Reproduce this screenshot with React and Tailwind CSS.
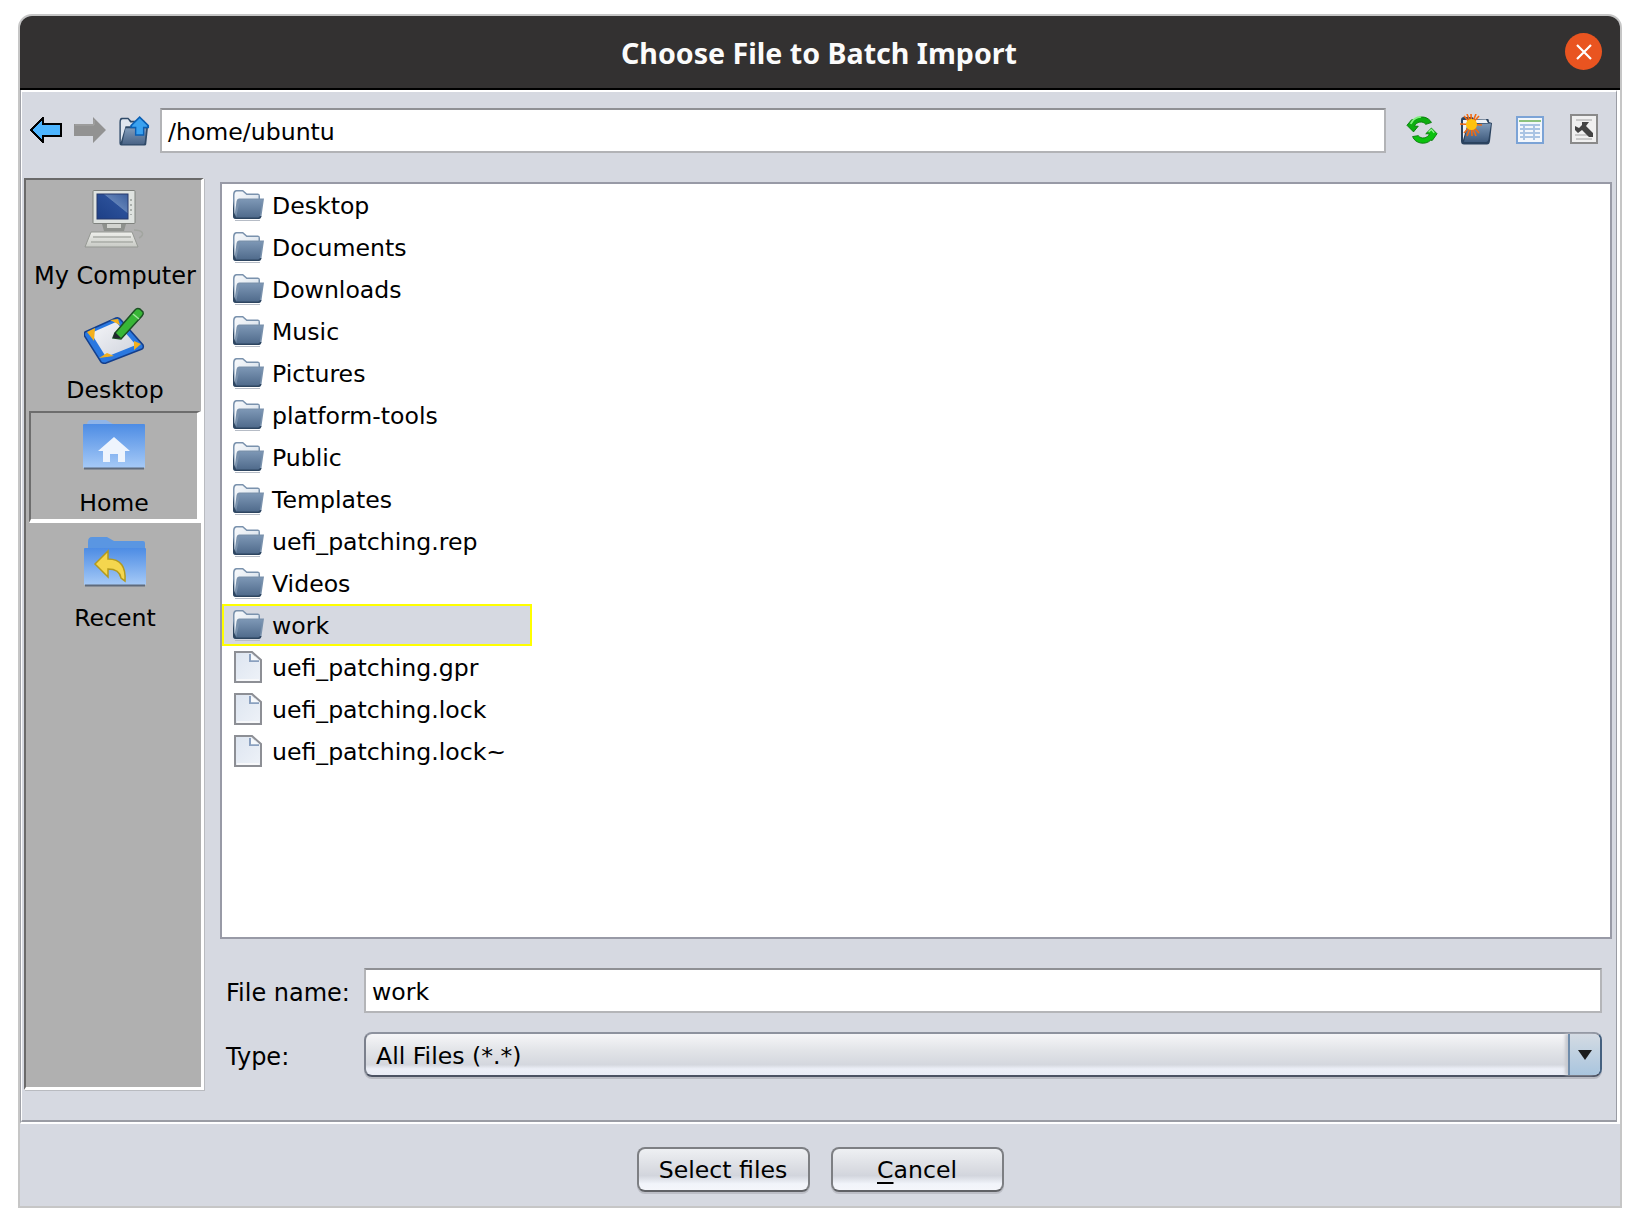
import React from "react";

const folderNames = ["Desktop","Documents","Downloads","Music","Pictures","platform-tools","Public","Templates","uefi_patching.rep","Videos","work"];
const fileNames = ["uefi_patching.gpr","uefi_patching.lock","uefi_patching.lock~"];

function Folder() {
  return (
    <svg width="32" height="32" viewBox="0 0 32 32">
      <defs>
        <linearGradient id="fb" x1="0" y1="0" x2="0" y2="1">
          <stop offset="0" stopColor="#7c96b4" />
          <stop offset="1" stopColor="#506b8c" />
        </linearGradient>
        <linearGradient id="fbk" x1="0" y1="0" x2="1" y2="1">
          <stop offset="0" stopColor="#f8fafc" />
          <stop offset="1" stopColor="#d0dbe7" />
        </linearGradient>
      </defs>
      <path d="M1 6 Q1 1.5 4 1 L11 1 L15 4.5 L26 4.5 Q28 4.5 28 7 L28 9.5 L32 9.5 L29.5 27 Q29 30 26.5 30 L4 30 Q1 30 1 27 Z" fill="#7a92ad" />
      <path d="M1 12 L1 27 Q1 30 4 30 L26.5 30 Q29 30 29.5 27 L28 27 L4 28 L2.6 24 Z" fill="#2d4560" />
      <path d="M2.5 6.5 Q2.5 2.8 4.5 2.4 L10.5 2.4 L14.5 6 L26.5 6 L26.5 9.5 L7 9.5 Q5 9.5 4.6 12 L2.6 26 Z" fill="url(#fbk)" />
      <path d="M8 11 L30.5 11 L28 26.5 Q27.7 28.4 26 28.4 L4 28.4 Z" fill="url(#fb)" />
      <path d="M3 31.5 L28 31.5" stroke="#b6bcc6" strokeWidth="1" />
    </svg>
  );
}

function FileIcon() {
  return (
    <svg width="28" height="32" viewBox="0 0 28 32">
      <defs>
        <linearGradient id="fl" x1="0" y1="0" x2="1" y2="1">
          <stop offset="0" stopColor="#dde5f0" />
          <stop offset="1" stopColor="#eef2f8" />
        </linearGradient>
      </defs>
      <path d="M1 1 L18 1 L27 9 L27 31 L1 31 Z" fill="url(#fl)" stroke="#8d8f95" strokeWidth="2" />
      <path d="M16 3 L16 10 L25 10" fill="none" stroke="#8aa0bf" strokeWidth="2" />
      <path d="M17 3 L25 9.2 L17 9.2 Z" fill="#f7f9fb" />
      <path d="M3 29 L25 29" stroke="#f7f8fa" strokeWidth="2" />
    </svg>
  );
}

function ArrowLeft() {
  return (
    <svg width="32" height="26" viewBox="0 0 32 26" shapeRendering="crispEdges" className="mt-[9px] shrink-0">
      <path d="M1 13 L13 1 L13 7 L31 7 L31 19 L13 19 L13 25 Z" fill="#4db5ff" stroke="#000" strokeWidth="2" />
    </svg>
  );
}
function ArrowRight() {
  return (
    <svg width="32" height="26" viewBox="0 0 32 26" className="ml-[12px] mt-[9px] shrink-0">
      <path d="M0 7 L19 7 L19 0 L32 13 L19 26 L19 19 L0 19 Z" fill="#929292" />
      <path d="M1 8 L20 8 L20 3" fill="none" stroke="#a6a6a6" strokeWidth="1" />
    </svg>
  );
}
function UpFolder() {
  return (
    <svg width="32" height="32" viewBox="0 0 34 34" className="ml-[12px] mt-[7px] shrink-0">
      <defs>
        <linearGradient id="ub" x1="0" y1="0" x2="0" y2="1">
          <stop offset="0" stopColor="#7f9ab9" />
          <stop offset="1" stopColor="#4a6486" />
        </linearGradient>
      </defs>
      <path d="M1.5 8 Q1.5 3 4 3 L11 3 L14 6 L28 6 L28 12 L32 12 L30 31 Q30 32.5 28 32.5 L3.5 32.5 Q1.5 32.5 1.5 30 Z" fill="#2f4a68" />
      <path d="M3 8 Q3 4.5 5 4.5 L10.5 4.5 L13 8 L26 8 L26 12 L8 12 L3 29 Z" fill="#dfe6ef" />
      <path d="M8 14 L30 14 L28.3 29.5 Q28 31 27 31 L4.5 31 Z" fill="url(#ub)" />
      <path d="M23 1 L33 11 L33 14 L28 14 L28 22 L18 22 L18 14 L13 14 L13 11 Z" fill="#0a5fb4" />
      <path d="M23 3.5 L31 11.5 L31 12.5 L26.5 12.5 L26.5 20.5 L19.5 20.5 L19.5 12.5 L15 12.5 L15 11.5 Z" fill="#3aa2f0" />
    </svg>
  );
}
function Refresh() {
  return (
    <svg width="32" height="32" viewBox="0 0 34 34" className="ml-[20px] mt-[6px] shrink-0">
      <path d="M27 9 C24 3 15 1 10 6 L6 6 L1 12 L8 19 L13 13 L9 13 C11 8 18 7 21 11 Z" fill="#0dae10" stroke="#0b7d0d" strokeWidth="1" />
      <path d="M5 10.5 C7 6 11 3 16 3" stroke="#7ff07d" strokeWidth="2" fill="none" />
      <path d="M7 24 C10 32 21 33 26 28 L28 28 L33 21 L27 15 L21 21 L25 21 C23 26 16 27 13 23 Z" fill="#0cc20f" stroke="#0b7d0d" strokeWidth="1" />
      <path d="M24 19 L27 16.5 L30 20" stroke="#8cf58a" strokeWidth="1.5" fill="none" />
    </svg>
  );
}
function NewFolder() {
  return (
    <svg width="32" height="32" viewBox="0 0 32 32" className="ml-[22px] mt-[6px] shrink-0">
      <defs>
        <linearGradient id="nb" x1="0" y1="0" x2="0" y2="1">
          <stop offset="0" stopColor="#7f9ab9" />
          <stop offset="1" stopColor="#3f5a7c" />
        </linearGradient>
      </defs>
      <path d="M1 6 Q1 3 4 3 L12 3 L15 5 L28 5 Q29 5 29 8 L32 9 L30 27 Q29.5 30.5 27 30.5 L4 30.5 Q1 30.5 1 27 Z" fill="#2b435f" />
      <path d="M3 6 L26 5.5 L28 9 L8 9 L3 26 Z" fill="#eef2f7" />
      <path d="M8 10 L31 9.5 L28.5 25 Q28 28 26 28 L4 28 Z" fill="url(#nb)" />
      <g stroke="#f26a11" strokeWidth="1.6" fill="none">
        <path d="M11 0 L12 22" />
        <path d="M0 10 L22 11" />
        <path d="M4 2 L19 19" />
        <path d="M19 2 L4 19" />
        <path d="M7 0 L16 22" />
        <path d="M16 0 L7 22" />
      </g>
      <circle cx="11.5" cy="10.5" r="5.5" fill="#ffc20e" />
    </svg>
  );
}
function ListView() {
  return (
    <svg width="28" height="28" viewBox="0 0 28 28" shapeRendering="crispEdges" className="ml-[24px] mt-[8px] shrink-0">
      <rect x="1" y="1" width="26" height="26" fill="#f3f7fc" stroke="#7ba3d6" strokeWidth="2" />
      <rect x="3" y="4" width="22" height="2" fill="#8cc27f" />
      <path d="M4 9 H24 M4 13 H24 M4 17 H24 M4 21 H24" stroke="#a9c4e4" strokeWidth="2" />
      <path d="M8 8 V24 M18 8 V24" stroke="#a9c4e4" strokeWidth="2" />
    </svg>
  );
}
function Details() {
  return (
    <svg width="28" height="30" viewBox="0 0 28 30" className="ml-[26px] mt-[6px] shrink-0">
      <rect x="1" y="1" width="26" height="28" fill="#f0f0f0" stroke="#8a8a8a" strokeWidth="2" />
      <path d="M6 6 H22 M5 21 H22 M6 25 H22" stroke="#c9c9c9" strokeWidth="2" />
      <path d="M12 8 L19 8 L16 12 L23 19 L23 23 L19 23 L12 16 L8 19 L5 16 L5 12 L9 14 L12 11 Z" fill="#434343" />
    </svg>
  );
}

function Computer() {
  return (
    <svg width="62" height="58" viewBox="0 0 62 58">
      <defs>
        <linearGradient id="scr" x1="0" y1="1" x2="1" y2="0">
          <stop offset="0" stopColor="#1d3f86" />
          <stop offset="0.6" stopColor="#2a4f98" />
          <stop offset="0.62" stopColor="#5f80b6" />
          <stop offset="1" stopColor="#3c5f9e" />
        </linearGradient>
        <linearGradient id="kb" x1="0" y1="0" x2="0" y2="1">
          <stop offset="0" stopColor="#eff0ec" />
          <stop offset="1" stopColor="#c8cac5" />
        </linearGradient>
      </defs>
      <rect x="9" y="0.5" width="42" height="33" rx="1" fill="#dfe3e0" stroke="#7f827e" />
      <rect x="13" y="4" width="31" height="25" fill="url(#scr)" stroke="#26386a" />
      <path d="M47 9 V25" stroke="#aab0ac" strokeWidth="2" strokeDasharray="2 3" />
      <path d="M18 34 H42 L40 41 H20 Z" fill="#8e918d" />
      <rect x="23" y="34" width="14" height="4" fill="#d2d4d0" />
      <path d="M7 42 L48 42 L54 57 L1 57 Z" fill="url(#kb)" stroke="#959893" />
      <path d="M9 47 H47 M7 52 H49" stroke="#a9aca7" strokeWidth="1.5" />
      <path d="M50 40 C58 40 62 44 55 48" fill="none" stroke="#a2a5a0" strokeWidth="1.5" />
    </svg>
  );
}
function DesktopIcon() {
  return (
    <svg width="62" height="58" viewBox="0 0 62 58">
      <defs>
        <linearGradient id="ds" x1="0" y1="0" x2="1" y2="1">
          <stop offset="0" stopColor="#f5f6f9" />
          <stop offset="1" stopColor="#cfd3dc" />
        </linearGradient>
      </defs>
      <path d="M1 26 L32 12 Q35 11 37 14 L59 39 Q60 42 58 43 L22 57 Q19 58 17 56 L0.5 30 Q0 27 1 26 Z" fill="#2a78e0" stroke="#143f8c" strokeWidth="1.5" />
      <path d="M7 27 L32 16 L52 39 L22 51 Z" fill="url(#ds)" />
      <path d="M3 26 L11 22 L10 35 Z M26 14 L34 13 L36 19 Z M15 52 L23 47 L30 50 Z M50 35 L57 38 L50 44 Z" fill="#f3b01c" />
      <path d="M31 27 L51 4 Q53 1.5 56 3 L59 6 Q60 8 58 10 L37 33 L29 32 Z" fill="#38b636" stroke="#1c4f24" strokeWidth="1.5" />
      <path d="M29 32 L31 26 L37 32 Z" fill="#20272e" />
      <path d="M49 8 L55 13" stroke="#9fe69c" strokeWidth="1.5" />
    </svg>
  );
}
function BlueFolder({ children, tab, top }) {
  return (
    <svg width="64" height="50" viewBox="0 0 64 50">
      <defs>
        <linearGradient id="bf" x1="0" y1="0" x2="0" y2="1">
          <stop offset="0" stopColor="#4d8ce4" />
          <stop offset="1" stopColor="#a6caf7" />
        </linearGradient>
      </defs>
      <path d="M5 5 Q5 0 9 0 L24 0 L31 4 L60 4 Q62 4 62 6 L62 14 L5 14 Z" fill={tab} />
      <rect x="1" y={top} width="62" height={48 - top} rx="1" fill="url(#bf)" />
      <rect x="2" y="47.5" width="60" height="2" fill="#5f6b7c" />
      {children}
    </svg>
  );
}

function Row({ children, selected, icon }) {
  return (
    <div className={selected
      ? "box-border flex h-[42px] w-[310px] items-center gap-[8px] border-2 border-[#ffff00] bg-[#d6d9e1] pl-[8px]"
      : "flex h-[42px] items-center gap-[8px] pl-[10px]"}>
      <span className="flex h-[32px] w-[32px] items-center justify-center">{icon}</span>
      <span className="pt-[2px] text-[23.6px] leading-[32px] text-black">{children}</span>
    </div>
  );
}

const sans = "font-['DejaVu_Sans',sans-serif]";
const btn = "h-[45px] w-[173px] rounded-[8px] border-2 border-[#7d7f83] border-b-[#606266] bg-[linear-gradient(#eef0f3,#d9dbe1_50%,#d2d5dd_65%,#f1f4fa_85%,#f4f6fb)] pt-[2px] text-[23.6px] text-black shadow-[0_2px_0_#bcbec6]";

export default function App() {
  return (
    <div className={`h-[1226px] w-[1640px] bg-white pl-[18px] pt-[14px] ${sans}`}>
      <div className="flex h-[1194px] w-[1604px] flex-col overflow-hidden rounded-t-[14px] border-2 border-[#c6c6c6] bg-[#d6d9e1]">
        <div className="relative flex h-[74px] shrink-0 items-center justify-center border-b-2 border-black bg-[#333131] pr-[2px] pt-[2px]">
          <span className="font-['Noto_Sans',sans-serif] text-[28.6px] font-bold text-[#fbfbfb]">Choose File to Batch Import</span>
          <span className="absolute right-[18px] top-[17px] flex h-[37px] w-[37px] items-center justify-center rounded-full bg-[#e95420]">
            <svg width="20" height="20" viewBox="0 0 20 20"><path d="M3 3 L17 17 M17 3 L3 17" stroke="#fff" strokeWidth="2.2" /></svg>
          </span>
        </div>

        <div className="flex h-[1034px] shrink-0 flex-col border-b-2 border-l border-r-[3px] border-b-white border-l-[#a0a2a8] border-r-white">
          <div className="flex h-[1032px] flex-col border-t-2 border-l border-r border-b-2 border-t-white border-l-white border-r-[#9a9ca4] border-b-[#9a9ca4]">
            <div className="flex h-[86px] shrink-0 items-start pl-[8px] pt-[16px]">
              <ArrowLeft />
              <ArrowRight />
              <UpFolder />
              <div className="ml-[10px] flex h-[45px] w-[1226px] shrink-0 items-center border-2 border-[#b2b3b6] border-t-[#8f9094] bg-white pl-[6px] pt-[4px] text-[23.6px] text-black">/home/ubuntu</div>
              <Refresh />
              <NewFolder />
              <ListView />
              <Details />
            </div>

            <div className="flex min-h-0 flex-1 items-start pl-[2px]">
              <div className="flex h-[912px] w-[180px] shrink-0 flex-col border-l-2 border-t-2 border-r-[3px] border-b-[3px] border-l-[#6a6a6a] border-t-[#6a6a6a] border-r-white border-b-white bg-[#b0b0b0] shadow-[1px_1px_0_#b9bbc0]">
                <div className="flex h-[114px] flex-col items-center pl-[3px] pt-[10px]">
                  <div className="h-[58px]"><Computer /></div>
                  <span className="mt-[12px] text-[24px] leading-[32px] text-black">My Computer</span>
                </div>
                <div className="flex h-[117px] flex-col items-center pl-[3px] pt-[12px]">
                  <div className="h-[58px]"><DesktopIcon /></div>
                  <span className="mt-[10px] text-[23.6px] leading-[32px] text-black">Desktop</span>
                </div>
                <div className="ml-[3px] flex h-[112px] w-[172px] flex-col items-center border-b-[4px] border-l-2 border-r-[4px] border-t-2 border-b-white border-l-[#6d6d6d] border-r-white border-t-[#6d6d6d] pt-[7px]">
                  <div className="h-[50px]">
                    <BlueFolder tab="#8fb4e8" top={4}>
                      <path d="M32 17 L48 31 L43 31 L43 42 L36 42 L36 34 L28 34 L28 42 L21 42 L21 31 L16 31 Z" fill="#eef4fd" />
                    </BlueFolder>
                  </div>
                  <span className="mt-[17px] text-[23.6px] leading-[32px] text-black">Home</span>
                </div>
                <div className="flex flex-col items-center pl-[3px] pt-[14px]">
                  <div className="h-[50px]">
                    <BlueFolder tab="#5a96e2" top={11}>
                      <path d="M12 27 L25 14 L25 22 C38 22 43 30 42 44 L38 41 C37 35 33 32 25 32 L25 40 Z" fill="#f4d64e" stroke="#b39a1e" strokeWidth="1.5" />
                    </BlueFolder>
                  </div>
                  <span className="mt-[15px] text-[23.6px] leading-[32px] text-black">Recent</span>
                </div>
              </div>

              <div className="ml-[16px] mt-[4px] flex w-[1392px] flex-col">
                <div className="h-[757px] border-2 border-[#989aa6] bg-white">
                  {folderNames.map((n) => (
                    <Row key={n} selected={n === "work"} icon={<Folder />}>{n}</Row>
                  ))}
                  {fileNames.map((n) => (
                    <Row key={n} icon={<FileIcon />}>{n}</Row>
                  ))}
                </div>
                <div className="mt-[29px] flex h-[45px] items-center pl-[6px]">
                  <span className="w-[138px] pt-[4px] text-[24px] text-black">File name:</span>
                  <div className="flex h-[45px] w-[1238px] items-center border-2 border-[#b4b5b8] border-t-[#8f9094] bg-white pl-[6px] pt-[4px] text-[23.6px] text-black">work</div>
                </div>
                <div className="mt-[19px] flex h-[45px] items-center pl-[6px]">
                  <span className="w-[138px] pt-[4px] text-[24px] text-black">Type:</span>
                  <div className="flex h-[45px] w-[1238px] rounded-[8px] border-2 border-b-[#4b5262] border-l-[#7b808c] border-r-[#45607f] border-t-[#8d929e] bg-[linear-gradient(#f6f6f8,#e2e4e8_40%,#d4d7de_75%,#eceff7_85%,#e9ecf5)] shadow-[0_2px_0_#b8bac2]">
                    <span className="flex flex-1 items-center pl-[10px] pt-[4px] text-[23.6px] text-black">All Files (*.*)</span>
                    <span className="flex w-[32px] items-center justify-center rounded-r-[6px] border-l-2 border-l-[#6f8cab] bg-[linear-gradient(#d4dbe3,#a9c5de)] shadow-[-3px_0_3px_#c8cad0]">
                      <svg width="14" height="10" viewBox="0 0 14 10"><path d="M0 0 H14 L7 10 Z" fill="#1c1c1c" /></svg>
                    </span>
                  </div>
                </div>
              </div>
            </div>
          </div>
        </div>

        <div className="flex flex-1 items-start justify-center gap-[21px] pt-[23px]">
          <button className={btn}>Select files</button>
          <button className={btn}><span className="underline decoration-2 underline-offset-[4px]">C</span>ancel</button>
        </div>
      </div>
    </div>
  );
}
